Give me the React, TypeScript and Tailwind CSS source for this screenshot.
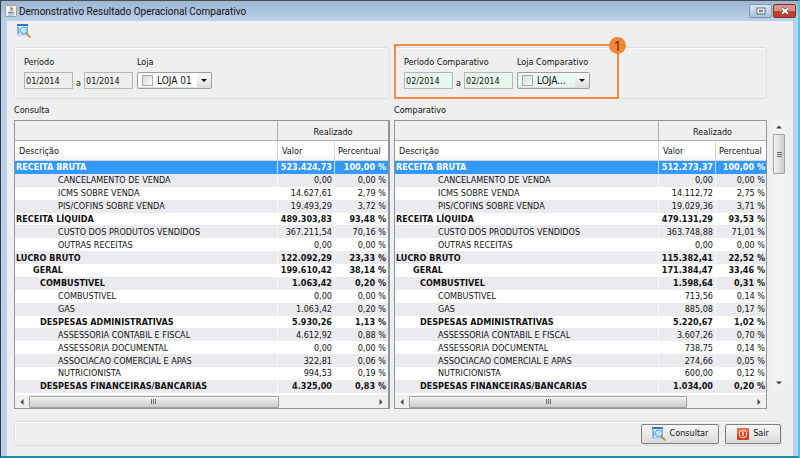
import React from "react";

type Row = { label: string; level: 0 | 1 | 2 | 3; value: string; percent: string };

const levelPadding = ["pl-px", "pl-[18px]", "pl-[25px]", "pl-[43px]"];

const structure: [string, 0 | 1 | 2 | 3][] = [
  ["RECEITA BRUTA", 0],
  ["CANCELAMENTO DE VENDA", 3],
  ["ICMS SOBRE VENDA", 3],
  ["PIS/COFINS SOBRE VENDA", 3],
  ["RECEITA LÍQUIDA", 0],
  ["CUSTO DOS PRODUTOS VENDIDOS", 3],
  ["OUTRAS RECEITAS", 3],
  ["LUCRO BRUTO", 0],
  ["GERAL", 1],
  ["COMBUSTIVEL", 2],
  ["COMBUSTIVEL", 3],
  ["GAS", 3],
  ["DESPESAS ADMINISTRATIVAS", 2],
  ["ASSESSORIA CONTABIL E FISCAL", 3],
  ["ASSESSORIA DOCUMENTAL", 3],
  ["ASSOCIACAO COMERCIAL E APAS", 3],
  ["NUTRICIONISTA", 3],
  ["DESPESAS FINANCEIRAS/BANCARIAS", 2],
];

const makeRows = (figures: [string, string][]): Row[] =>
  structure.map(([label, level], i) => ({ label, level, value: figures[i][0], percent: figures[i][1] }));

const consulta = makeRows([
  ["523.424,73", "100,00"],
  ["0,00", "0,00"],
  ["14.627,61", "2,79"],
  ["19.493,29", "3,72"],
  ["489.303,83", "93,48"],
  ["367.211,54", "70,16"],
  ["0,00", "0,00"],
  ["122.092,29", "23,33"],
  ["199.610,42", "38,14"],
  ["1.063,42", "0,20"],
  ["0,00", "0,00"],
  ["1.063,42", "0,20"],
  ["5.930,26", "1,13"],
  ["4.612,92", "0,88"],
  ["0,00", "0,00"],
  ["322,81", "0,06"],
  ["994,53", "0,19"],
  ["4.325,00", "0,83"],
]);

const comparativo = makeRows([
  ["512.273,37", "100,00"],
  ["0,00", "0,00"],
  ["14.112,72", "2,75"],
  ["19.029,36", "3,71"],
  ["479.131,29", "93,53"],
  ["363.748,88", "71,01"],
  ["0,00", "0,00"],
  ["115.382,41", "22,52"],
  ["171.384,47", "33,46"],
  ["1.598,64", "0,31"],
  ["713,56", "0,14"],
  ["885,08", "0,17"],
  ["5.220,67", "1,02"],
  ["3.607,26", "0,70"],
  ["738,75", "0,14"],
  ["274,66", "0,05"],
  ["600,00", "0,12"],
  ["1.034,00", "0,20"],
]);

function SearchWindowIcon() {
  return (
    <svg viewBox="0 0 14 14" className="h-3.5 w-3.5 shrink-0" aria-hidden="true">
      <rect x="0.5" y="0.5" width="10" height="10.5" fill="#f4f9ff" stroke="#8fb8e6" />
      <rect x="0" y="0" width="11" height="2" fill="#2f74d6" />
      <rect x="1" y="3" width="1.4" height="7" fill="#6ea6e6" />
      <path d="M9.6 9.6 L12.8 12.8" stroke="#d0903f" strokeWidth="2" strokeLinecap="round" />
      <circle cx="6.8" cy="6.4" r="3.5" fill="#b4e8fa" stroke="#4b9ce2" strokeWidth="1" />
      <path d="M4.9 6 Q5.3 4.4 7 4.3" stroke="#ffffff" strokeWidth="0.9" fill="none" />
    </svg>
  );
}

function JavaIcon() {
  return (
    <svg viewBox="0 0 12 12" className="h-3 w-3 shrink-0" aria-hidden="true">
      <rect x="0.5" y="0.5" width="11" height="11" rx="1" fill="#f3f3f1" stroke="#9b9fa5" />
      <path d="M6.4 1.6 C4.6 3.4 7.6 3.8 5.8 6 M7.8 3 C6.4 4 7.4 4.6 6.8 5.8" stroke="#e5762b" strokeWidth="1.3" fill="none" />
      <path d="M3 6.8 H8 V7.6 Q7.6 8.8 5.5 8.8 Q3.4 8.8 3 7.6 Z" fill="#6f93b5" />
      <path d="M8 7 Q9.6 6.8 9 8 L7.8 8.4 M2.6 10 H8.8" stroke="#6f93b5" strokeWidth="0.8" fill="none" />
    </svg>
  );
}

function PowerIcon() {
  return (
    <svg viewBox="0 0 12 12" className="h-3 w-3 shrink-0" aria-hidden="true">
      <rect x="0" y="0" width="12" height="12" rx="1" fill="#dd3a1c" />
      <path d="M0 1 Q0 0 1 0 H11 Q12 0 12 1 V4 Q6 3 0 6 Z" fill="#ee6a4c" />
      <circle cx="6" cy="6" r="3.7" stroke="#ffe9e2" strokeWidth="1.1" fill="none" />
      <path d="M6 3.8 V8.2" stroke="#ffffff" strokeWidth="1.3" />
    </svg>
  );
}

function Arrow({ dir, className = "" }: { dir: "up" | "down" | "left" | "right"; className?: string }) {
  const shapes = {
    up: "M0 4.5 L3 1.5 L6 4.5 Z",
    down: "M0 1.5 L3 4.5 L6 1.5 Z",
    left: "M4.5 0 L1.5 3 L4.5 6 Z",
    right: "M1.5 0 L4.5 3 L1.5 6 Z",
  };
  return (
    <svg viewBox="0 0 6 6" className={`h-1.5 w-1.5 shrink-0 ${className}`} aria-hidden="true">
      <path d={shapes[dir]} fill="#444444" />
    </svg>
  );
}

function StoreSelect({ id, text, tint, width }: { id: string; text: string; tint: string; width: string }) {
  return (
    <div className={`flex h-[17px] items-center rounded-[2px] border border-[#9c9ea1] bg-linear-to-b from-[#fbfbfb] to-[#dedede] ${width}`}>
      <div className={`flex h-3 flex-1 items-center pl-1 ${tint}`}>
        <input
          type="checkbox"
          aria-label={text}
          className="h-[11px] w-[11px] shrink-0 appearance-none border border-[#a5a8ac] bg-linear-to-br from-[#d7dade] to-[#fafafa]"
        />
        <select id={id} className="w-full appearance-none bg-transparent pl-1 text-[10px] leading-3 outline-none">
          <option>{text}</option>
        </select>
      </div>
      <svg viewBox="0 0 6 3" className="mx-1 h-[3px] w-1.5 shrink-0" aria-hidden="true">
        <path d="M0 0 H6 L3 3 Z" fill="#111111" />
      </svg>
    </div>
  );
}

type FilterProps = {
  id: string;
  period: string;
  store: string;
  month: string;
  storeText: string;
  tint: string;
  inputTint: string;
  selectWidth: string;
  children?: React.ReactNode;
};

function FilterPanel({ id, period, store, month, storeText, tint, inputTint, selectWidth, children }: FilterProps) {
  const field = `h-[17px] w-[49px] border border-[#b3b6b9] px-px text-[9px] outline-none ${inputTint}`;
  return (
    <div className="relative flex h-[52px] gap-1 rounded-[3px] border border-[#d6e1ea] px-[9px] pt-[7px] shadow-[inset_1px_1px_0_#fafcfd]">
      <div>
        <label htmlFor={`${id}-de`} className="block h-[17px] leading-[14px]">
          {period}
        </label>
        <div className="flex items-center">
          <input id={`${id}-de`} defaultValue={month} className={field} />
          <span className="w-[11px] pt-1 text-center leading-3">a</span>
          <input aria-label={`${period} até`} defaultValue={month} className={field} />
        </div>
      </div>
      <div>
        <label htmlFor={`${id}-loja`} className="block h-[17px] whitespace-nowrap leading-[14px]">
          {store}
        </label>
        <StoreSelect id={`${id}-loja`} text={storeText} tint={tint} width={selectWidth} />
      </div>
      {children}
    </div>
  );
}

function Grip({ vertical = false }: { vertical?: boolean }) {
  return (
    <span className={`flex gap-px ${vertical ? "flex-col" : ""}`}>
      {[0, 1, 2].map((n) => (
        <span key={n} className={`bg-[#6c6c6c] ${vertical ? "h-px w-[5px]" : "h-[5px] w-px"}`} />
      ))}
    </span>
  );
}

type ReportProps = { rows: Row[]; thumb: string; percentColumn: string; percentPadding: string; edge: string };

function ReportTable({ rows, thumb, percentColumn, percentPadding, edge }: ReportProps) {
  const columns = (
    <colgroup>
      <col />
      <col className="w-[57px]" />
      <col className={percentColumn} />
    </colgroup>
  );
  return (
    <div className={`border border-[#8e959c] bg-white ${edge}`}>
      <table className="w-full table-fixed border-separate border-spacing-0">
        {columns}
        <thead className="text-left font-normal">
          <tr className="h-5 bg-[#efefef]">
            <th className="border-b border-[#a9b0b6] p-0" />
            <th colSpan={2} className="border-b border-l border-[#a9b0b6] p-0 pt-1 text-center font-normal">
              Realizado
            </th>
          </tr>
          <tr className="h-5 bg-linear-to-b from-white from-60% to-[#f1f2f4]">
            <th className="border-b border-[#d5d5d5] p-0 pt-0.5 pl-1 font-normal">Descrição</th>
            <th className="border-b border-l border-[#d5d5d5] p-0 pt-0.5 pl-1 font-normal">Valor</th>
            <th className="border-b border-l border-[#d5d5d5] p-0 pt-0.5 pl-[3px] font-normal">Percentual</th>
          </tr>
        </thead>
      </table>
      <table className="h-[232px] w-full table-fixed border-separate border-spacing-0">
        {columns}
        <tbody className="text-[9px] leading-3">
          {rows.map((row, i) => (
            <tr
              key={i}
              className={`${i === 0 ? "bg-[#3399ff] text-white" : i % 2 ? "bg-[#ebebef]" : "bg-white"} ${row.level < 3 ? "font-bold" : ""}`}
            >
              <td className={`whitespace-nowrap p-0 ${levelPadding[row.level]}`}>{row.label}</td>
              <td className="border-l border-white/70 p-0 pr-0.5 text-right">{row.value}</td>
              <td className={`whitespace-nowrap border-l border-white/70 p-0 text-right ${percentPadding}`}>
                {row.percent} %
              </td>
            </tr>
          ))}
        </tbody>
      </table>
      <div className="mt-0.5 flex h-[13px] items-center bg-[#f0f0f0]">
        <Arrow dir="left" className="mx-1" />
        <div
          className={`flex h-3 items-center justify-center rounded-[1px] border border-[#a3a3a3] bg-linear-to-b from-[#f4f4f4] to-[#cbcbcb] ${thumb}`}
        >
          <Grip />
        </div>
        <Arrow dir="right" className="ml-auto mr-1" />
      </div>
    </div>
  );
}

const buttonClass =
  "flex h-5 items-center justify-center gap-1 rounded-[2px] border border-[#7f7f7f] bg-linear-to-b from-[#f6f6f6] to-[#dcdcdc] text-[9px]";

export default function App() {
  return (
    <div className="flex min-h-screen flex-col border-t border-r-2 border-b-2 border-l border-t-[#4a4f55] border-r-[#4cc8e8] border-b-[#1a8ea8] border-l-[#3a3d42] bg-[#b9d1ea] font-['DejaVu_Sans_Condensed','DejaVu_Sans',sans-serif] text-[9px] text-[#111111]">
      <header className="flex h-5 items-center gap-0.5 bg-linear-to-b from-[#9db7d3] to-[#bad2eb] pl-1">
        <JavaIcon />
        <h1 className="font-['Roboto',sans-serif] text-[10px]">Demonstrativo Resultado Operacional Comparativo</h1>
        <div className="ml-auto mr-0.5 flex gap-px">
          <button aria-label="Maximizar" className="flex h-3.5 w-[23px] items-center justify-center rounded-[2px] border border-[#8296ad] bg-linear-to-b from-[#dbe7f3] to-[#a9c1da]">
            <svg viewBox="0 0 10 8" className="h-2 w-2.5" aria-hidden="true">
              <rect x="1" y="1" width="8" height="6" fill="#ffffff" stroke="#5a6470" />
              <rect x="3.5" y="3.2" width="3" height="1.6" fill="#8ea6c0" stroke="#5a6470" strokeWidth="0.8" />
            </svg>
          </button>
          <button aria-label="Fechar" className="flex h-3.5 w-[23px] items-center justify-center rounded-[2px] border border-[#84322b] bg-linear-to-b from-[#dc9387] from-45% to-[#bd3f2c] to-55%">
            <svg viewBox="0 0 10 8" className="h-2 w-2.5" aria-hidden="true">
              <path d="M2 1.2 L8 6.8 M8 1.2 L2 6.8" stroke="#5a4a4a" strokeWidth="3" />
              <path d="M2 1.2 L8 6.8 M8 1.2 L2 6.8" stroke="#ffffff" strokeWidth="1.9" />
            </svg>
          </button>
        </div>
      </header>

      <main className="mr-[5px] ml-[6px] flex-1 bg-[#efefef] pl-[7px]">
        <div className="flex h-[26px] items-center pl-[3px] pb-1.5">
          <button aria-label="Pesquisar">
            <SearchWindowIcon />
          </button>
        </div>

        <div className="mr-[26px] grid grid-cols-[376fr_373fr] gap-x-1">
          <FilterPanel
            id="consulta"
            period="Período"
            store="Loja"
            month="01/2014"
            storeText="LOJA 01"
            tint="bg-white"
            inputTint="bg-[#efefef]"
            selectWidth="w-[75px]"
          />
          <FilterPanel
            id="comparativo"
            period="Período Comparativo"
            store="Loja Comparativo"
            month="02/2014"
            storeText="LOJA..."
            tint="bg-[#e6f7ee]"
            inputTint="bg-[#e6f7ee]"
            selectWidth="w-[73px]"
          >
            <div className="pointer-events-none absolute -top-1 -bottom-px -left-px w-[225px] border-2 border-[#f58a3c]">
              <span className="absolute -top-[9px] -right-[9px] flex h-[17px] w-[17px] items-center justify-center rounded-full bg-[#f58634] font-['Open_Sans',sans-serif] text-[14px] leading-[17px] text-[#3a2c22]">
                1
              </span>
            </div>
          </FilterPanel>
        </div>

        <div className="flex">
          <div className="mr-1.5 grid min-w-0 flex-1 grid-cols-[376fr_373fr] gap-x-1">
            <section>
              <h2 className="flex h-[21px] items-center pt-[3px]">Consulta</h2>
              <ReportTable
                rows={consulta}
                thumb="w-[67%]"
                percentColumn="w-[54px]"
                percentPadding="pr-0.5"
                edge="border-r-2"
              />
            </section>
            <section>
              <h2 className="flex h-[21px] items-center pt-[3px]">Comparativo</h2>
              <ReportTable
                rows={comparativo}
                thumb="w-3/4"
                percentColumn="w-[51px]"
                percentPadding="pr-px"
                edge="border-r"
              />
            </section>
          </div>
          <div className="mt-[21px] mr-2 mb-[19px] flex w-3 flex-col items-center bg-[#f2f2f2]">
            <Arrow dir="up" className="my-1" />
            <div className="flex h-10 w-3 items-center justify-center rounded-[1px] border border-[#a3a3a3] bg-linear-to-r from-[#f4f4f4] to-[#cbcbcb]">
              <Grip vertical />
            </div>
            <Arrow dir="down" className="mt-auto mb-1" />
          </div>
        </div>

        <footer className="mt-3 mr-[11px] mb-2 flex h-[25px] items-center justify-end gap-1.5 rounded-[3px] border border-[#d6e1ea] shadow-[inset_1px_1px_0_#fafcfd]">
          <button className={`${buttonClass} w-[78px]`}>
            <SearchWindowIcon />
            Consultar
          </button>
          <button className={`${buttonClass} w-[56px]`}>
            <PowerIcon />
            Sair
          </button>
        </footer>
      </main>
    </div>
  );
}
